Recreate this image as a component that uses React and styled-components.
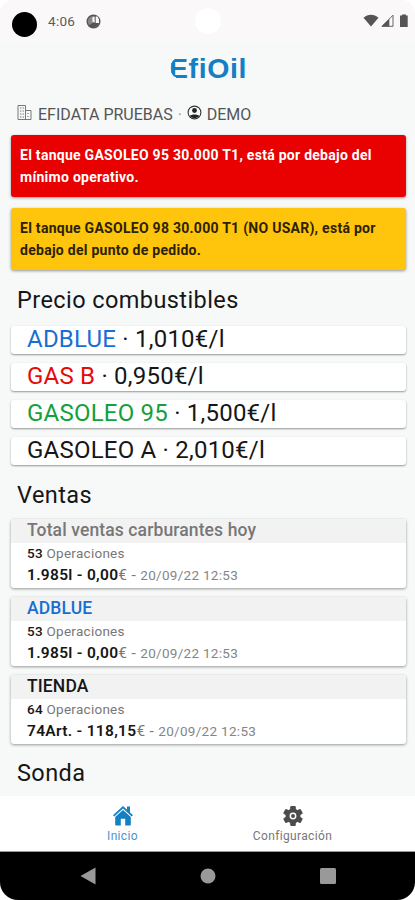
import React from 'react';
import styled, { createGlobalStyle } from 'styled-components';

const GlobalStyle = createGlobalStyle`
  * {
    box-sizing: border-box;
  }

  body {
    margin: 0;
    background-color: #fff;
    font-family: Roboto, 'Liberation Sans', sans-serif;
  }

  h1, h2, h3, p {
    margin: 0;
  }
`;

const Phone = styled.div`
  width: 415px;
  height: 900px;
  display: flex;
  flex-direction: column;
  overflow: hidden;
  border-radius: 14px 14px 18px 18px;
  background-color: #f7f9f9;
  color: #161616;
`;

const StatusBar = styled.header`
  flex: none;
  height: 42px;
  display: grid;
  grid-template-columns: 1fr 26px 1fr;
  align-items: center;
  background-color: #faf8f9;
`;

const StatusSide = styled.div`
  display: flex;
  align-items: center;
  justify-content: ${(props) => (props.$end ? 'flex-end' : 'flex-start')};
  gap: ${(props) => (props.$end ? '2px' : '0')};
  padding: ${(props) => (props.$end ? '0 4px 1px 0' : '0 0 0 12px')};
`;

const Lens = styled.span`
  width: 25px;
  height: 25px;
  margin: 6px 11px 0 0;
  border-radius: 50%;
  background-color: #000;
`;

const Notch = styled.span`
  width: 26px;
  height: 26px;
  border-radius: 50%;
  background-color: #fff;
`;

const Clock = styled.span`
  width: 38px;
  padding-bottom: 1px;
  font-size: 13.5px;
  letter-spacing: 0.3px;
  line-height: 16px;
  color: #5c5a5b;
`;

const Content = styled.main`
  flex: 1;
  min-height: 0;
  overflow: hidden;
  padding: 0 9px 0 11px;
`;

const Logo = styled.h1`
  height: 54px;
  display: flex;
  align-items: center;
  justify-content: center;
  padding: 0 1px 2px 0;
  font-family: 'Liberation Sans', sans-serif;
  font-size: 28.5px;
  font-weight: 700;
  line-height: 28px;
  letter-spacing: 0.6px;
  color: #147fc3;
`;

/* softens the left corners of the first letter */
const RoundLetter = styled.span`
  position: relative;

  &::after {
    content: '';
    position: absolute;
    inset: 3px 8px 3px 0;
    background: radial-gradient(circle at 12px 50%, transparent 10.5px, #f7f9f9 11px);
  }
`;

const Account = styled.div`
  height: 39px;
  display: flex;
  align-items: center;
  padding: 0 0 2px 6px;
  font-size: 16px;
  color: #555;

  svg {
    margin: 0 5px 4px 0;
  }
`;

const Dot = styled.span`
  width: 14px;
  text-align: center;
  color: #999;
`;

const Alert = styled.p`
  height: 62px;
  margin-bottom: 11px;
  padding: 10px 9px;
  border-radius: 3px;
  font-size: 14px;
  font-weight: 700;
  line-height: 21.5px;
  letter-spacing: 0.27px;
  color: ${(props) => props.$color};
  background-color: ${(props) => props.$background};
  box-shadow: 0 1px 3px rgba(0, 0, 0, 0.4);
`;

const Heading = styled.h2`
  height: 45px;
  padding: ${(props) => props.$top} 0 0 6px;
  font-size: 23.5px;
  font-weight: 400;
  line-height: 28px;
  letter-spacing: 0.42px;
`;

const Price = styled.p`
  height: 28px;
  margin-bottom: 9px;
  padding-left: 16px;
  border-radius: 3px;
  font-size: 24px;
  line-height: 27px;
  letter-spacing: 0.22px;
  background-color: #fff;
  box-shadow: 0 1px 2px rgba(0, 0, 0, 0.4);
`;

const Fuel = styled.span`
  color: ${(props) => props.$color};
`;

const Sale = styled.section`
  height: 69px;
  margin-bottom: 9px;
  overflow: hidden;
  border-radius: 3px;
  background-color: #fff;
  box-shadow: 0 1px 3px rgba(0, 0, 0, 0.4);
`;

const SaleTitle = styled.h3`
  height: 24px;
  padding-left: 16px;
  font-size: 17.5px;
  font-weight: 500;
  line-height: 22px;
  letter-spacing: 0.12px;
  color: ${(props) => props.$color};
  background-color: #f2f2f2;
`;

const SaleLine = styled.p`
  padding-left: 16px;
  font-size: ${(props) => (props.$total ? '15.5px' : '13.5px')};
  line-height: ${(props) => (props.$total ? '24px' : '20px')};
  letter-spacing: ${(props) => (props.$total ? '0.3px' : '0.27px')};
  color: #777;

  b {
    font-weight: ${(props) => (props.$total ? 600 : 500)};
    color: #161616;
  }

  small {
    font-size: 13.5px;
    letter-spacing: 0.3px;
    color: #858585;
  }
`;

const TabBar = styled.nav`
  flex: none;
  height: 56px;
  display: flex;
  justify-content: center;
  border-bottom: 1px solid #999;
  background-color: #fff;
`;

const Tab = styled.div`
  width: 170px;
  display: flex;
  flex-direction: column;
  align-items: center;
  padding-top: 9px;
  font-size: 12px;
  line-height: 14px;
  letter-spacing: 0.35px;
  color: ${(props) => (props.$active ? '#4b94cc' : '#777')};

  svg {
    margin-bottom: 2px;
  }
`;

const SystemBar = styled.footer`
  flex: none;
  height: 48px;
  display: flex;
  align-items: center;
  justify-content: center;
  gap: 104px;
  background-color: #000;
`;

const BuildingIcon = () => (
  <svg width="16" height="17" viewBox="0 0 16 17" fill="none" stroke="#777">
    <path d="M1 15.5V1.5h7.5v14M8.5 6.5h5.5v9H1" />
    <path d="M3 4h4M3 7h4M3 10h4M3 13h4M11 9v1M11 12v1" strokeWidth="1.2" strokeDasharray="1.4 1.2" />
  </svg>
);

const UserIcon = () => (
  <svg width="15" height="15" viewBox="0 0 15 15">
    <circle cx="7.5" cy="7.5" r="6.4" fill="none" stroke="#333" strokeWidth="1.1" />
    <circle cx="7.5" cy="5.5" r="2.4" fill="#222" />
    <path d="M2.8 11c1.5-2 7.9-2 9.4 0-2.2 2.7-7.2 2.7-9.4 0z" fill="#222" />
  </svg>
);

const AppBadge = () => (
  <svg width="15" height="15" viewBox="0 0 15 15">
    <circle cx="7.5" cy="7.5" r="6.3" fill="#8a8889" stroke="#555" strokeWidth="1.4" />
    <path d="M6.5 3h2v5h-2zM10 2.5h1.5l1.5 3V9h-3z" fill="#faf8f9" />
    <path d="M2.5 11.5 6.5 9h6.3a6.3 6.3 0 0 1-10.3 2.5z" fill="#555" />
  </svg>
);

const WifiIcon = () => (
  <svg width="16" height="13" viewBox="0 0 16 13">
    <path d="M.5 3.7C4.8-.3 11.2-.3 15.5 3.7L8 12.6z" fill="#565455" />
  </svg>
);

const SignalIcon = () => (
  <svg width="13" height="13" viewBox="0 0 13 13">
    <path d="M1 12.3h11V1.2z" fill="none" stroke="#666" />
    <path d="M.5 12.5h7.8V5z" fill="#565455" />
  </svg>
);

const BatteryIcon = () => (
  <svg width="15" height="14" viewBox="0 0 15 14">
    <path d="M6 1.5V.5h4v1h1.7V13H4V1.5z" fill="#565455" />
  </svg>
);

const HomeIcon = () => (
  <svg width="22" height="22" viewBox="0 0 22 22" fill="#147fc3">
    <path d="M11 1 1 10.2l1.3 1.3L11 3.6l8.7 7.9 1.3-1.3-3-2.8V1.5h-3v3.2z" />
    <path d="M11 5 3.2 12v7.8q0 .7.7.7h4.9v-6.7h4.4v6.7h4.9q.7 0 .7-.7V12z" />
  </svg>
);

const GearIcon = () => (
  <svg width="22" height="22" viewBox="0 0 22 22">
    <g fill="#4c4c4c">
      {[0, 60, 120].map((angle) => (
        <rect key={angle} x="8.2" y="1" width="5.6" height="20" rx="1.2" transform={`rotate(${angle} 11 11)`} />
      ))}
      <circle cx="11" cy="11" r="7.5" />
    </g>
    <circle cx="11" cy="11" r="2.7" fill="#4c4c4c" stroke="#fff" strokeWidth="1.5" />
  </svg>
);

const prices = [
  { name: 'ADBLUE', price: '1,010', color: '#176fd2' },
  { name: 'GAS B', price: '0,950', color: '#e60b0b' },
  { name: 'GASOLEO 95', price: '1,500', color: '#12a13b' },
  { name: 'GASOLEO A', price: '2,010', color: '#161616' },
];

const sales = [
  { name: 'Total ventas carburantes hoy', count: 53, total: '1.985l - 0,00', color: '#777' },
  { name: 'ADBLUE', count: 53, total: '1.985l - 0,00', color: '#176fd2' },
  { name: 'TIENDA', count: 64, total: '74Art. - 118,15', color: '#161616' },
];

const App = () => {
  return (
    <>
      <GlobalStyle />
      <Phone>
        <StatusBar>
          <StatusSide>
            <Lens />
            <Clock>4:06</Clock>
            <AppBadge />
          </StatusSide>
          <Notch />
          <StatusSide $end>
            <WifiIcon />
            <SignalIcon />
            <BatteryIcon />
          </StatusSide>
        </StatusBar>
        <Content>
          <Logo>
            <RoundLetter>E</RoundLetter>fiOil
          </Logo>
          <Account>
            <BuildingIcon />
            EFIDATA PRUEBAS
            <Dot>·</Dot>
            <UserIcon />
            DEMO
          </Account>
          <Alert $color="#fff" $background="#e90000">
            El tanque GASOLEO 95 30.000 T1, está por debajo del mínimo operativo.
          </Alert>
          <Alert $color="#2b2200" $background="#ffc40c">
            El tanque GASOLEO 98 30.000 T1 (NO USAR), está por debajo del punto de pedido.
          </Alert>
          <Heading $top="5px">Precio combustibles</Heading>
          {prices.map(({ name, price, color }) => (
            <Price key={name}>
              <Fuel $color={color}>{name}</Fuel> · {price}€/l
            </Price>
          ))}
          <Heading $top="7px">Ventas</Heading>
          {sales.map(({ name, count, total, color }) => (
            <Sale key={name}>
              <SaleTitle $color={color}>{name}</SaleTitle>
              <SaleLine>
                <b>{count}</b> Operaciones
              </SaleLine>
              <SaleLine $total>
                <b>{total}</b>€ - <small>20/09/22 12:53</small>
              </SaleLine>
            </Sale>
          ))}
          <Heading $top="6px">Sonda</Heading>
        </Content>
        <TabBar>
          <Tab $active>
            <HomeIcon />
            Inicio
          </Tab>
          <Tab>
            <GearIcon />
            Configuración
          </Tab>
        </TabBar>
        <SystemBar>
          <svg width="16" height="18" viewBox="0 0 16 18">
            <path d="M15.5.5v17L.5 9z" fill="#999" />
          </svg>
          <svg width="16" height="16" viewBox="0 0 16 16">
            <circle cx="8" cy="8" r="7.5" fill="#999" />
          </svg>
          <svg width="16" height="16" viewBox="0 0 16 16">
            <rect width="16" height="16" rx="1.5" fill="#999" />
          </svg>
        </SystemBar>
      </Phone>
    </>
  );
};

export default App;
